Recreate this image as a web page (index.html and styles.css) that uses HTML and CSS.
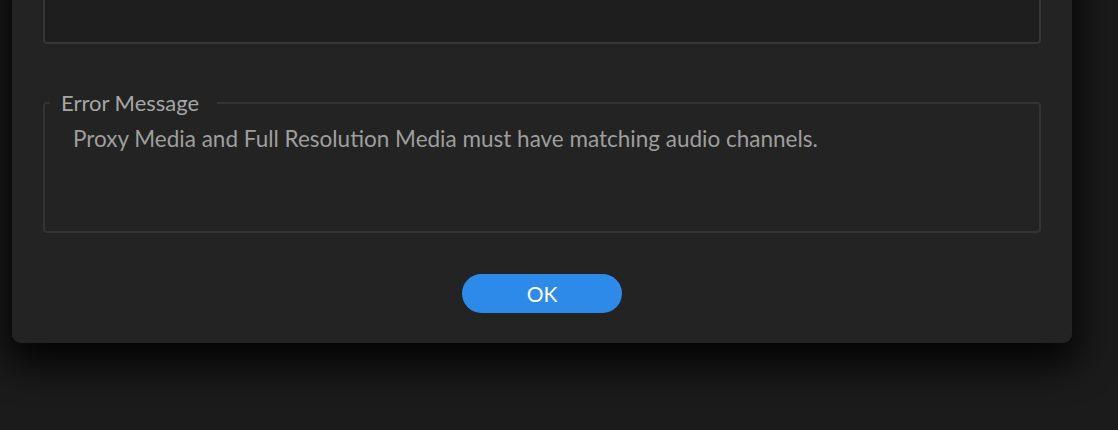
FILE: index.html
```html
<!DOCTYPE html>
<html lang="en">
<head>
<meta charset="utf-8">
<title>Error</title>
<link rel="stylesheet" href="styles.css">
</head>
<body>
<div class="screen">
  <div class="dialog">
    <div class="details-box"></div>
    <fieldset class="error-box">
      <legend class="error-legend">Error Message</legend>
      <p class="error-text">Proxy Media and Full Resolution Media must have matching audio channels.</p>
    </fieldset>
    <div class="actions">
      <button class="ok-button" type="button">OK</button>
    </div>
  </div>
</div>
</body>
</html>
```
FILE: styles.css
```css
html, body {
  margin: 0;
  padding: 0;
  background: #1b1b1b;
}
.screen {
  width: 1118px;
  height: 430px;
  overflow: hidden;
  padding: 0 46px 0 12px;
  box-sizing: border-box;
  font-family: Lato, "Open Sans", sans-serif;
}
.dialog {
  margin-top: -40px;
  background: #232323;
  border-radius: 0 0 9px 9px;
  padding: 0 31px 30px;
  box-shadow: 0 16px 36px 6px rgba(0, 0, 0, 0.85);
  display: flex;
  flex-direction: column;
}
.details-box {
  height: 82px;
  background: #1e1e1e;
  border: 2px solid #353535;
  border-top: none;
  border-radius: 0 0 4px 4px;
}
.error-box {
  margin: 47px 0 0;
  padding: 0 28px;
  height: 142px;
  box-sizing: border-box;
  border: 2px solid #343434;
  border-radius: 4px;
  min-width: 0;
}
.error-legend {
  margin-left: -23px;
  padding: 0 18px 0 11px;
  font-size: 22px;
  line-height: 24px;
  color: #a6a6a6;
}
.error-text {
  margin: 10px 0 0;
  font-size: 22.5px;
  line-height: 28px;
  color: #9e9e9e;
}
.actions {
  display: flex;
  justify-content: center;
  margin-top: 41px;
}
.ok-button {
  width: 160px;
  height: 39px;
  border: none;
  border-radius: 20px;
  background: #2e8ae8;
  color: #ffffff;
  font-family: Lato, "Open Sans", sans-serif;
  font-size: 21px;
  padding: 0;
}
```
